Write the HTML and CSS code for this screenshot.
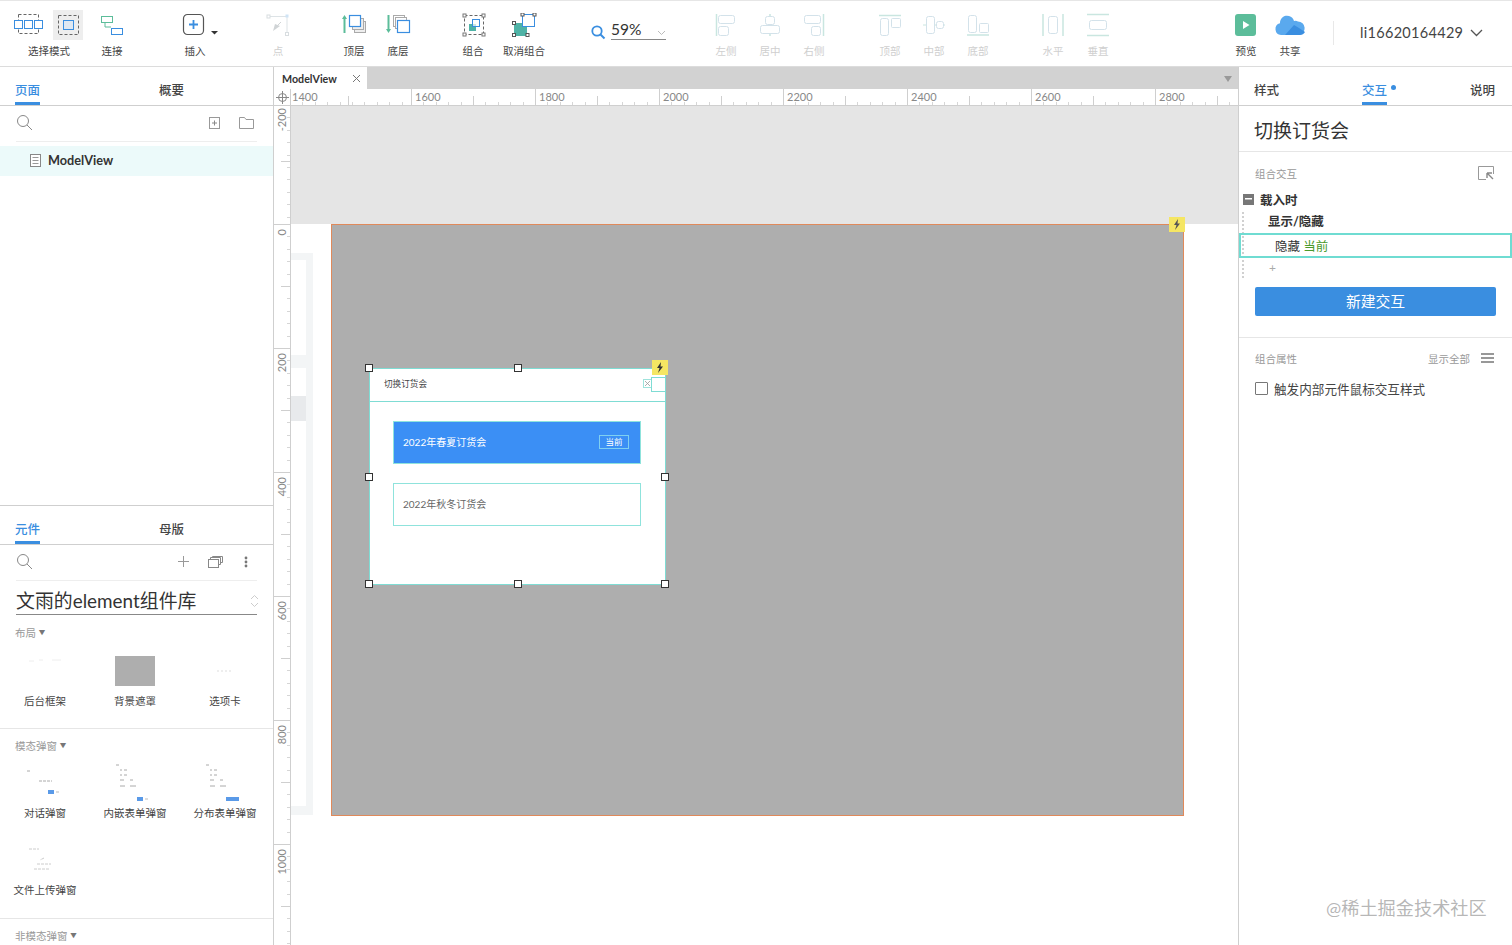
FILE: index.html
```html
<!DOCTYPE html>
<html lang="zh-CN">
<head>
    <meta charset="UTF-8">
    <title>ModelView</title>
    <link rel="stylesheet" href="styles.css">
</head>
<body>
<div class="app">
    <!-- Toolbar -->
    <header class="toolbar">
        <div class="tool tool-select">
            <div class="select-icons">
                <svg width="32" height="24" viewBox="0 0 32 24"><rect x="5.500" y="1.500" width="20" height="19" fill="none" stroke="#666" stroke-dasharray="3 2"/><g fill="#fff" stroke="#3a8ee0"><rect x="1.500" y="7.500" width="8" height="8"/><rect x="11.500" y="7.500" width="8" height="8"/><rect x="21.500" y="7.500" width="8" height="8"/></g></svg>
                <span class="select-active"><svg width="30" height="30" viewBox="0 0 30 30"><rect x="5.500" y="5.500" width="20" height="19" fill="none" stroke="#666" stroke-dasharray="3 2"/><rect x="10.500" y="10.500" width="10" height="9" fill="#dfe8f2" stroke="#3a8ee0"/></svg></span>
            </div>
            <span>选择模式</span>
        </div>
        <div class="tool">
            <svg width="24" height="24" viewBox="0 0 24 24"><rect x="1.500" y="3.500" width="11" height="6" fill="#fff" stroke="#5cbd9a"/><rect x="11.500" y="15.500" width="11" height="6" fill="#fff" stroke="#3a8ee0"/><path d="M5 10v4h6" fill="none" stroke="#5cbd9a"/></svg>
            <span>连接</span>
        </div>
        <div class="tool gap-insert">
            <svg class="insert-icon" width="40" height="24" viewBox="0 0 40 24"><rect x="1.500" y="1.500" width="20" height="20" rx="4" fill="none" stroke="#555" stroke-width="1.200"/><path d="M11.500 7v9M7 11.500h9" stroke="#3a8ee0" stroke-width="1.800"/><path d="M29 18h7l-3.500 3.500z" fill="#333"/></svg>
            <span>插入</span>
        </div>
        <div class="tool gap-insert off">
            <svg width="24" height="24" viewBox="0 0 24 24"><path d="M3 3.500h18v18" fill="none" stroke="#dde3e6"/><rect x="1" y="2" width="3" height="3" fill="#fff" stroke="#d8dde0"/><rect x="19.500" y="1.500" width="3" height="3" fill="#cfe4f5"/><rect x="19.500" y="19.500" width="3" height="3" fill="#fff" stroke="#d8dde0"/><path d="M7 18l2-7 5 2z" fill="#d0d4d6"/><path d="M11 13l4-4" stroke="#d0d4d6"/></svg>
            <span>点</span>
        </div>
        <div class="tool gap-order">
            <svg class="nudge" width="26" height="24" viewBox="0 0 26 24"><path d="M2.500 20V4" stroke="#5cbd9a" stroke-width="2"/><path d="M0 6l2.500-4L5 6z" fill="#5cbd9a"/><rect x="12.500" y="8.500" width="11" height="11" fill="#eee" stroke="#aaa"/><rect x="10.500" y="5.500" width="11" height="11" fill="#eee" stroke="#aaa"/><rect x="7.500" y="2.500" width="11" height="11" fill="#fff" stroke="#3a8ee0" stroke-width="1.200"/></svg>
            <span>顶层</span>
        </div>
        <div class="tool">
            <svg class="nudge" width="26" height="24" viewBox="0 0 26 24"><path d="M2.500 2v16" stroke="#5cbd9a" stroke-width="2"/><path d="M0 16l2.500 4L5 16z" fill="#5cbd9a"/><rect x="7.500" y="2.500" width="11" height="11" fill="#fff" stroke="#aaa"/><rect x="9.500" y="4.500" width="11" height="11" fill="#fff" stroke="#aaa"/><rect x="11.500" y="7.500" width="12" height="12" fill="#fff" stroke="#3a8ee0" stroke-width="1.200"/></svg>
            <span>底层</span>
        </div>
        <div class="tool gap-group">
            <svg class="nudge" width="24" height="24" viewBox="0 0 24 24"><rect x="2.500" y="2.500" width="19" height="19" fill="none" stroke="#666" stroke-dasharray="3 2"/><g fill="#fff" stroke="#777"><rect x="1" y="1" width="3" height="3"/><rect x="20" y="1" width="3" height="3"/><rect x="1" y="20" width="3" height="3"/><rect x="20" y="20" width="3" height="3"/></g><rect x="7" y="11" width="7" height="7" fill="#4fb3a6"/><rect x="10.500" y="6.500" width="7" height="7" fill="#fff" fill-opacity=".7" stroke="#3a8ee0"/></svg>
            <span>组合</span>
        </div>
        <div class="tool tool-wide">
            <svg class="nudge" width="26" height="24" viewBox="0 0 26 24"><rect x="2" y="10" width="13" height="13" fill="#4fb3a6"/><rect x="10.500" y="1.500" width="12" height="12" fill="#fff" stroke="#3a8ee0"/><g fill="#fff" stroke="#555"><rect x="9" y="0" width="3" height="3"/><rect x="21" y="0" width="3" height="3"/><rect x="0.500" y="8.500" width="3" height="3"/><rect x="0.500" y="20.500" width="3" height="3"/><rect x="14" y="20.500" width="3" height="3"/></g></svg>
            <span>取消组合</span>
        </div>
        <div class="zoom-box">
            <svg width="15" height="15" viewBox="0 0 15 15"><circle cx="6" cy="6" r="4.700" fill="none" stroke="#3a8ee0" stroke-width="1.800"/><path d="M9.500 9.500l4 4" stroke="#3a8ee0" stroke-width="2"/></svg>
            <div class="zoom-value">59%<svg class="zoom-arrow" width="9" height="6" viewBox="0 0 9 6"><path d="M1 1l3.500 3.500L8 1" fill="none" stroke="#bbb"/></svg></div>
        </div>
        <div class="tool off gap-align">
            <svg width="24" height="24" viewBox="0 0 24 24"><path d="M2.500 1v22" stroke="#c9e6e0" stroke-width="1.500"/><rect x="4.500" y="2.500" width="16" height="8" rx="2" class="pale"/><rect x="4.500" y="13.500" width="10" height="9" rx="2" class="pale"/></svg>
            <span>左侧</span>
        </div>
        <div class="tool off">
            <svg width="24" height="24" viewBox="0 0 24 24"><path d="M12 1v22" stroke="#c9e6e0" stroke-width="1.500"/><rect x="7.500" y="3.500" width="9" height="8" rx="2" class="pale"/><rect x="2.500" y="12.500" width="19" height="8" rx="2" class="pale"/></svg>
            <span>居中</span>
        </div>
        <div class="tool off">
            <svg width="24" height="24" viewBox="0 0 24 24"><path d="M21.500 1v22" stroke="#c9e6e0" stroke-width="1.500"/><rect x="2.500" y="2.500" width="16" height="8" rx="2" class="pale"/><rect x="9.500" y="13.500" width="9" height="9" rx="2" class="pale"/></svg>
            <span>右侧</span>
        </div>
        <div class="tool off gap-order">
            <svg width="24" height="24" viewBox="0 0 24 24"><path d="M1 2.500h22" stroke="#c9e6e0" stroke-width="1.500"/><rect x="2.500" y="5.500" width="8" height="17" rx="2" class="pale"/><rect x="13.500" y="5.500" width="9" height="9" rx="1" class="pale"/></svg>
            <span>顶部</span>
        </div>
        <div class="tool off">
            <svg width="24" height="24" viewBox="0 0 24 24"><path d="M1 12h22" stroke="#c9e6e0"/><rect x="4.500" y="3.500" width="8" height="17" rx="2" class="pale"/><rect x="14.500" y="8.500" width="7" height="7" rx="2" class="pale"/></svg>
            <span>中部</span>
        </div>
        <div class="tool off">
            <svg width="24" height="24" viewBox="0 0 24 24"><path d="M1 22h22" stroke="#c9e6e0" stroke-width="1.500"/><rect x="2.500" y="2.500" width="8" height="17" rx="2" class="pale"/><rect x="13.500" y="10.500" width="9" height="9" rx="1" class="pale"/></svg>
            <span>底部</span>
        </div>
        <div class="tool off gap-group">
            <svg width="24" height="24" viewBox="0 0 24 24"><path d="M2 1v22M22 1v22" stroke="#c9e6e0" stroke-width="1.500"/><rect x="7.500" y="3.500" width="9" height="17" rx="2" class="pale"/></svg>
            <span>水平</span>
        </div>
        <div class="tool off gap-thin">
            <svg width="24" height="24" viewBox="0 0 24 24"><path d="M1 1.500h22M1 22.500h22" stroke="#c9e6e0" stroke-width="1.500"/><rect x="3.500" y="7.500" width="17" height="9" rx="2" class="pale"/></svg>
            <span>垂直</span>
        </div>
        <div class="tool gap-run">
            <svg width="24" height="24" viewBox="0 0 24 24"><rect x="1" y="1" width="21" height="22" rx="3" fill="#5cbd9a"/><path d="M9 8l6.500 4L9 16z" fill="#fff"/></svg>
            <span>预览</span>
        </div>
        <div class="tool">
            <svg width="32" height="24" viewBox="0 0 32 24"><path d="M7 22a6 6 0 0 1-1-11.800A7 7 0 0 1 15 3a7 7 0 0 1 5 5a5 5 0 0 1 4 .500a6.800 6.800 0 0 1 1 13.500z" fill="#5aa9ee"/><path d="M11 22l9-10 5 3 6 4a6 6 0 0 1-6 3z" fill="#3a8ee0"/></svg>
            <span>共享</span>
        </div>
        <div class="user-split"></div>
        <div class="user-name">li16620164429<svg width="13" height="8" viewBox="0 0 13 8"><path d="M1 1l5.500 5.500L12 1" fill="none" stroke="#555" stroke-width="1.300"/></svg></div>
    </header>

    <div class="main">
        <!-- Left side: pages and widgets -->
        <aside class="left-panel">
            <section class="pages">
                <div class="tabs tabs-left">
                    <span class="tab active">页面</span>
                    <span class="tab tab-second">概要</span>
                </div>
                <div class="search-row">
                    <svg width="17" height="17" viewBox="0 0 17 17"><circle cx="7" cy="7" r="5.500" fill="none" stroke="#888"/><path d="M11 11l5 5" stroke="#888"/></svg>
                    <svg class="push" width="11" height="12" viewBox="0 0 11 12"><rect x=".5" y=".5" width="10" height="11" fill="none" stroke="#999"/><path d="M5.500 3.500v5M3 6h5" stroke="#888"/></svg>
                    <svg width="15" height="12" viewBox="0 0 15 12"><path d="M.5 11.500V.5h5l1.500 2h7.500v9z" fill="none" stroke="#999"/></svg>
                </div>
                <div class="page-row">
                    <svg width="11" height="13" viewBox="0 0 11 13"><rect x=".5" y=".5" width="10" height="12" fill="#fff" stroke="#888"/><path d="M2.500 3.500h6M2.500 6.500h6M2.500 9.500h6" stroke="#999"/></svg>
                    ModelView
                </div>
            </section>
            <section class="widgets">
                <div class="tabs tabs-left">
                    <span class="tab active">元件</span>
                    <span class="tab tab-second">母版</span>
                </div>
                <div class="search-row">
                    <svg width="17" height="17" viewBox="0 0 17 17"><circle cx="7" cy="7" r="5.500" fill="none" stroke="#888"/><path d="M11 11l5 5" stroke="#888"/></svg>
                    <svg class="push" width="11" height="11" viewBox="0 0 11 11"><path d="M5.500 0v11M0 5.500h11" stroke="#999"/></svg>
                    <svg class="lib-copy" width="15" height="12" viewBox="0 0 15 12"><rect x=".5" y="3.500" width="10" height="8" fill="#fff" stroke="#888"/><path d="M2.500 3.500v-2h10v7h-2M4.500 1.500v-1h10v6h-2" fill="none" stroke="#888"/></svg>
                    <svg width="4" height="12" viewBox="0 0 4 12"><circle cx="2" cy="2" r="1.400" fill="#777"/><circle cx="2" cy="6" r="1.400" fill="#777"/><circle cx="2" cy="10" r="1.400" fill="#777"/></svg>
                </div>
                <div class="lib-select">文雨的element组件库
                    <svg width="9" height="14" viewBox="0 0 9 14"><path d="M1 5l3.500-3.500L8 5M1 9l3.500 3.500L8 9" fill="none" stroke="#ccc"/></svg>
                </div>
                <div class="group first">
                    <div class="group-title">布局 <i>▼</i></div>
                    <div class="cards">
                        <div class="card">
                            <svg width="40" height="30" viewBox="0 0 40 30"><path d="M4 5h5M14 4h4M27 4h9" stroke="#eee"/></svg>
                            <span>后台框架</span>
                        </div>
                        <div class="card">
                            <div class="thumb-mask"></div>
                            <span>背景遮罩</span>
                        </div>
                        <div class="card">
                            <svg width="40" height="30" viewBox="0 0 40 30"><path d="M12 15h16" stroke="#ddd" stroke-dasharray="2 2"/></svg>
                            <span>选项卡</span>
                        </div>
                    </div>
                </div>
                <div class="group modal">
                    <div class="group-title">模态弹窗 <i>▼</i></div>
                    <div class="cards">
                        <div class="card card-tall">
                            <svg width="42" height="38" viewBox="0 0 42 38"><path d="M3 7h3M15 17h13" stroke="#aaa" stroke-dasharray="3 1"/><rect x="24" y="26" width="6" height="4" fill="#5a9ae8"/><path d="M32 28h3" stroke="#bbb"/></svg>
                            <span>对话弹窗</span>
                        </div>
                        <div class="card card-tall">
                            <svg width="42" height="38" viewBox="0 0 42 38"><path d="M2 1h3M6 6h2M10 6h3M6 11h2M10 11h3M6 16h4M16 16h3M6 22h5M16 22h6" stroke="#aaa"/><rect x="23" y="33" width="6" height="4" fill="#5a9ae8"/><path d="M31 35h3" stroke="#bbb"/></svg>
                            <span>内嵌表单弹窗</span>
                        </div>
                        <div class="card card-tall">
                            <svg width="42" height="38" viewBox="0 0 42 38"><path d="M2 1h3M6 6h2M10 6h3M6 11h2M10 11h3M6 16h4M16 16h3M6 22h5M16 22h6" stroke="#aaa"/><rect x="22" y="33" width="13" height="4" fill="#5a9ae8"/></svg>
                            <span>分布表单弹窗</span>
                        </div>
                        <div class="card card-tall card-upload">
                            <svg width="42" height="30" viewBox="0 0 42 30"><path d="M5 5h10M20 14l-4 2M13 20h14M10 25h16" stroke="#ccc" stroke-dasharray="3 1"/></svg>
                            <span>文件上传弹窗</span>
                        </div>
                    </div>
                </div>
                <div class="group">
                    <div class="group-title">非模态弹窗 <i>▼</i></div>
                </div>
            </section>
        </aside>

        <!-- Center: canvas -->
        <main class="center">
            <div class="doc-tabs">
                <div class="doc-tab">ModelView
                    <svg width="9" height="9" viewBox="0 0 9 9"><path d="M1 1l7 7M8 1l-7 7" stroke="#777"/></svg>
                </div>
                <span class="doc-arrow"></span>
            </div>
            <div class="ruler-h">
                <div class="ruler-corner">
                    <svg width="13" height="13" viewBox="0 0 13 13"><circle cx="6.500" cy="6.500" r="4" fill="none" stroke="#888"/><path d="M6.500 0v13M0 6.500h13" stroke="#888"/></svg>
                </div>
                <div class="h-seg h-first">1400</div>
                <div class="h-seg">1600</div>
                <div class="h-seg">1800</div>
                <div class="h-seg">2000</div>
                <div class="h-seg">2200</div>
                <div class="h-seg">2400</div>
                <div class="h-seg">2600</div>
                <div class="h-seg h-last">2800</div>
            </div>
            <div class="workspace">
                <div class="ruler-v">
                    <div class="v-seg v-first"><span>-200</span></div>
                    <div class="v-seg"><span>0</span></div>
                    <div class="v-seg"><span>200</span></div>
                    <div class="v-seg"><span>400</span></div>
                    <div class="v-seg"><span>600</span></div>
                    <div class="v-seg"><span>800</span></div>
                    <div class="v-seg"><span>1000</span></div>
                </div>
                <div class="canvas">
                    <div class="canvas-top"></div>
                    <div class="ghost">
                        <div class="ghost-inner"></div>
                        <div class="ghost-row"></div>
                    </div>
                    <div class="mask-page">
                        <span class="bolt bolt-page">
                            <svg width="8" height="11" viewBox="0 0 8 11"><path d="M5 0L1 6h2.500L2 11l5-6.500H4.500z" fill="#555"/></svg>
                        </span>
                        <div class="dialog">
                            <div class="dialog-head">切换订货会
                                <span class="close-x">
                                    <svg width="9" height="9" viewBox="0 0 9 9"><rect x=".5" y=".5" width="8" height="8" fill="#fff" stroke="#9fe3dc"/><path d="M2 2l5 5M7 2L2 7" stroke="#999" stroke-width=".8"/></svg>
                                </span>
                                <span class="close-box"></span>
                            </div>
                            <div class="dialog-body">
                                <div class="season season-on">2022年春夏订货会<span class="season-tag">当前</span></div>
                                <div class="season">2022年秋冬订货会</div>
                            </div>
                            <span class="bolt bolt-dialog">
                                <svg width="8" height="11" viewBox="0 0 8 11"><path d="M5 0L1 6h2.500L2 11l5-6.500H4.500z" fill="#333"/></svg>
                            </span>
                            <i class="handle h-tl"></i><i class="handle h-tc"></i>
                            <i class="handle h-ml"></i><i class="handle h-mr"></i>
                            <i class="handle h-bl"></i><i class="handle h-bc"></i><i class="handle h-br"></i>
                        </div>
                    </div>
                </div>
            </div>
        </main>

        <!-- Right side: interactions -->
        <aside class="right-panel">
            <div class="tabs tabs-right">
                <span class="tab">样式</span>
                <span class="tab active tab-dot">交互</span>
                <span class="tab">说明</span>
            </div>
            <div class="widget-name">切换订货会</div>
            <div class="inter-section">
                <div class="section-head">
                    <span>组合交互</span>
                    <svg width="16" height="14" viewBox="0 0 16 14"><path d="M8 13.500H.5V.5h15V8" fill="none" stroke="#999"/><path d="M9 7h5M9 7v5M9 7l6 6" fill="none" stroke="#888" stroke-width="1.400"/></svg>
                </div>
                <div class="inter-tree">
                    <div class="tree-event"><span class="minus"></span>载入时</div>
                    <div class="tree-action">显示/隐藏</div>
                    <div class="tree-target">隐藏 <em>当前</em></div>
                    <div class="tree-add">+</div>
                </div>
                <div class="new-btn">新建交互</div>
            </div>
            <div class="props">
                <div class="section-head">
                    <span>组合属性</span>
                    <span class="show-all">显示全部</span>
                    <svg width="13" height="10" viewBox="0 0 13 10"><path d="M0 1h13M0 5h13M0 9h13" stroke="#777" stroke-width="1.500"/></svg>
                </div>
                <label class="check-row"><span class="checkbox"></span>触发内部元件鼠标交互样式</label>
            </div>
            <div class="watermark">@稀土掘金技术社区</div>
        </aside>
    </div>
</div>
</body>
</html>
```

FILE: styles.css
```css
* {
    box-sizing: border-box;
}

body {
    margin: 0;
    font-family: "Lato", "Noto Sans CJK SC", sans-serif;
    color: #333;
    background: #fff;
}

.app {
    width: 1512px;
    height: 945px;
    display: flex;
    flex-direction: column;
    overflow: hidden;
}

/* Toolbar */
.toolbar {
    height: 67px;
    flex: none;
    display: flex;
    align-items: flex-start;
    padding-left: 8px;
    border-top: 1px solid #e6e6e6;
    border-bottom: 1px solid #dcdcdc;
}

.tool {
    width: 44px;
    height: 65px;
    flex: none;
    display: flex;
    flex-direction: column;
    align-items: center;
    padding-top: 12px;
    font-size: 10.5px;
    color: #444;
}

.tool svg {
    height: 24px;
    flex: none;
}

.tool > span {
    position: relative;
    top: 6px;
    line-height: 16px;
    white-space: nowrap;
}

.tool-select {
    width: 82px;
    padding-top: 9px;
}

.select-icons {
    display: flex;
    align-items: center;
    gap: 8px;
    height: 30px;
    margin-left: -3px;
}

.tool-select > span {
    top: 3px;
}

.select-active {
    display: block;
    width: 30px;
    height: 30px;
    background: #eeeeee;
}

.select-active svg {
    height: 30px;
}

.tool-wide {
    width: 58px;
}

.insert-icon {
    margin-left: 14px;
}

.nudge {
    margin-left: 2px;
}

.gap-insert {
    margin-left: 39px;
}

.gap-order {
    margin-left: 32px;
}

.gap-group {
    margin-left: 31px;
}

.gap-align {
    margin-left: 37px;
}

.gap-thin {
    margin-left: 1px;
}

.gap-run {
    margin-left: 104px;
}

.off {
    color: #cfcfcf;
}

.pale {
    fill: #fff;
    stroke: #d3e2ea;
}

.zoom-box {
    width: 76px;
    margin-left: 38px;
    padding-top: 23px;
    display: flex;
    align-items: flex-start;
    gap: 5px;
    flex: none;
}

.zoom-box > svg {
    margin-top: 1px;
}

.zoom-value {
    width: 55px;
    height: 19px;
    margin-top: -3px;
    padding-top: 1px;
    border-bottom: 1px solid #888;
    font-size: 15.5px;
    line-height: 15px;
    position: relative;
}

.zoom-arrow {
    position: absolute;
    right: 0;
    top: 9px;
}

.user-split {
    width: 1px;
    height: 24px;
    margin: 20px 0 0 21px;
    background: #e8e8e8;
    flex: none;
}

.user-name {
    margin: 23px 0 0 26px;
    font-size: 14.5px;
    line-height: 18px;
    display: flex;
    align-items: center;
    gap: 7px;
    letter-spacing: .3px;
    color: #444;
}

.main {
    flex: 1;
    display: flex;
    min-height: 0;
}

/* Tabs shared by the side panels */
.tabs {
    height: 39px;
    display: flex;
    border-bottom: 1px solid #cfcfcf;
    padding-top: 12px;
    font-size: 12.5px;
    font-weight: 500;
}

.tab {
    height: 26px;
    line-height: 24px;
    color: #444;
}

.tab.active {
    color: #3a8ee0;
    border-bottom: 3px solid #3a8ee0;
}

.tabs-left {
    padding-left: 15px;
}

.tab-second {
    margin-left: 119px;
}

/* Left panel */
.left-panel {
    width: 274px;
    flex: none;
    border-right: 1px solid #cfcfcf;
    display: flex;
    flex-direction: column;
}

.pages {
    height: 439px;
    flex: none;
    border-bottom: 1px solid #cfcfcf;
}

.search-row {
    height: 36px;
    margin: 0 16px;
    padding-bottom: 2px;
    display: flex;
    align-items: center;
    border-bottom: 1px solid #eeeeee;
}

.push {
    margin-left: auto;
}

.pages .search-row {
    padding-right: 3px;
    gap: 19px;
}

.widgets .search-row {
    padding-right: 9px;
    gap: 19px;
}

.lib-copy {
    margin-right: 2px;
}

.page-row {
    height: 30px;
    margin-top: 4px;
    padding-left: 30px;
    padding-bottom: 2px;
    display: flex;
    align-items: center;
    gap: 7px;
    background: #ecfafa;
    font-size: 12.7px;
    font-weight: 700;
}

.widgets {
    flex: 1;
    min-height: 0;
}

.lib-select {
    height: 26px;
    margin: 8px 16px 0;
    padding-bottom: 2px;
    border-bottom: 1px solid #888;
    display: flex;
    align-items: center;
    justify-content: space-between;
    font-size: 18.9px;
    line-height: 24px;
    color: #333;
}

.lib-select svg {
    margin-right: -2px;
}

.group {
    border-bottom: 1px solid #e6e6e6;
    padding-top: 10px;
}

.group.first {
    height: 114px;
    padding-top: 11px;
}

.group.modal {
    height: 190px;
}

.group:last-child {
    border-bottom: 0;
}

.group-title {
    padding-left: 15px;
    height: 14px;
    font-size: 10.5px;
    line-height: 14px;
    color: #999;
}

.group-title i {
    font-style: normal;
    font-size: 6.5px;
    vertical-align: 2px;
    color: #777;
}

.cards {
    display: grid;
    grid-template-columns: repeat(3, 90px);
}

.card {
    height: 60px;
    margin-top: 16px;
    display: flex;
    flex-direction: column;
    align-items: center;
    font-size: 10.5px;
    color: #444;
}

.card svg {
    flex: none;
}

.card span {
    margin-top: 7px;
    line-height: 16px;
    white-space: nowrap;
}

.card-tall {
    height: 67px;
    margin-top: 11px;
}

.card-tall span {
    margin-top: 3px;
}

.card-upload {
    margin-top: 13px;
}

.card-upload span {
    margin-top: 8px;
}

.thumb-mask {
    width: 40px;
    height: 30px;
    background: #aeaeae;
}

/* Center */
.center {
    width: 964px;
    flex: none;
    display: flex;
    flex-direction: column;
    min-height: 0;
}

.doc-tabs {
    height: 22px;
    flex: none;
    display: flex;
    justify-content: space-between;
    align-items: center;
    background: #d2d2d2;
}

.doc-tab {
    width: 93px;
    height: 22px;
    background: #fff;
    display: flex;
    align-items: center;
    justify-content: space-between;
    padding: 0 6px 0 8px;
    font-size: 10.7px;
    font-weight: 700;
}

.doc-arrow {
    width: 0;
    height: 0;
    margin: 2px 6px 0 0;
    border-style: solid;
    border-width: 6px 4.500px 0;
    border-color: #999 transparent transparent;
}

.ruler-h {
    height: 17px;
    flex: none;
    display: flex;
    border-bottom: 1px solid #cfcfcf;
    background-color: #fff;
    overflow: hidden;
}

.ruler-corner {
    width: 17px;
    flex: none;
    display: flex;
    align-items: center;
    justify-content: center;
    border-right: 1px solid #cfcfcf;
}

.h-seg {
    width: 124px;
    flex: none;
    border-left: 1px solid #cfcfcf;
    padding-left: 3px;
    font-size: 11px;
    line-height: 15px;
    color: #888;
    background-image:
        linear-gradient(#cfcfcf, #cfcfcf),
        repeating-linear-gradient(90deg, transparent 0 11.400px, #d6d6d6 11.400px 12.400px);
    background-size: 1px 9px, 100% 3px;
    background-position: 61px 100%, 0 100%;
    background-repeat: no-repeat;
}

.h-first {
    width: 120px;
    border-left: 0;
    background-position: 57px 100%, 0 100%;
    padding-left: 1px;
}

.h-last {
    width: 84px;
}

.workspace {
    flex: 1;
    display: flex;
    min-height: 0;
}

.ruler-v {
    width: 17px;
    flex: none;
    border-right: 1px solid #cfcfcf;
    background: #fff;
}

.v-seg {
    height: 124px;
    border-top: 1px solid #cfcfcf;
    padding-top: 4px;
    font-size: 11px;
    color: #888;
    background-image:
        linear-gradient(#cfcfcf, #cfcfcf),
        repeating-linear-gradient(180deg, transparent 0 11.400px, #d6d6d6 11.400px 12.400px);
    background-size: 9px 1px, 3px 100%;
    background-position: 100% 61px, 100% 0;
    background-repeat: no-repeat;
}

.v-seg span {
    display: block;
    width: 12px;
    writing-mode: vertical-rl;
    transform: rotate(180deg);
    line-height: 12px;
    margin-left: 2px;
}

.v-first {
    height: 118px;
    border-top: 0;
    padding-top: 2px;
    background-position: 100% 55px, 100% 0;
}

.canvas {
    flex: 1;
    position: relative;
    background: #fff;
    min-width: 0;
}

.canvas-top {
    height: 118px;
    background: #e5e5e5;
}

.ghost {
    position: absolute;
    left: 0;
    top: 147px;
    width: 22px;
    height: 562px;
    background: #f3f5f6;
}

.ghost-inner {
    position: absolute;
    left: 0;
    top: 7px;
    width: 15px;
    height: 95px;
    background: #fff;
}

.ghost-row {
    position: absolute;
    left: 0;
    top: 115px;
    width: 15px;
    height: 438px;
    background: linear-gradient(#fff 0 28px, #e8eaec 28px 53px, #fff 53px);
}

.mask-page {
    position: absolute;
    left: 40px;
    top: 118px;
    width: 853px;
    height: 592px;
    background: #aeaeae;
    border: 1px solid #e0895a;
}

.bolt {
    position: absolute;
    display: flex;
    align-items: center;
    justify-content: center;
    background: #f5e663;
    width: 16px;
    height: 15px;
    z-index: 2;
}

.bolt-page {
    right: -2px;
    top: -8px;
}

.dialog {
    position: absolute;
    left: 37px;
    top: 143px;
    width: 297px;
    height: 217px;
    background: #fff;
    border: 1px solid #7fdcd4;
}

.dialog-head {
    height: 33px;
    padding-left: 14px;
    border-bottom: 1px solid #7fdcd4;
    font-size: 8.6px;
    line-height: 30px;
    color: #444;
    position: relative;
}

.close-x {
    position: absolute;
    right: 13px;
    top: 10px;
    line-height: 0;
}

.close-box {
    position: absolute;
    right: -1px;
    top: 8px;
    width: 15px;
    height: 15px;
    border: 1px solid #7fdcd4;
    background: #fff;
}

.dialog-body {
    padding: 19px 24px 0 23px;
    display: flex;
    flex-direction: column;
    gap: 19px;
}

.season {
    height: 43px;
    padding: 0 11px 2px 9px;
    display: flex;
    align-items: center;
    justify-content: space-between;
    border: 1px solid #8fe3dc;
    font-size: 10px;
    color: #666;
}

.season-on {
    background: #3b8ff5;
    color: #fff;
}

.season-tag {
    width: 30px;
    height: 14px;
    border: 1px solid #7fd0f0;
    font-size: 8.5px;
    line-height: 12px;
    text-align: center;
}

.bolt-dialog {
    right: -3px;
    top: -9px;
}

.handle {
    position: absolute;
    width: 8px;
    height: 8px;
    background: #fff;
    border: 1.500px solid #333;
    z-index: 1;
}

.h-tl { left: -5px; top: -5px; }
.h-tc { left: 144px; top: -5px; }
.h-ml { left: -5px; top: 104px; }
.h-mr { right: -4px; top: 104px; }
.h-bl { left: -5px; bottom: -4px; }
.h-bc { left: 144px; bottom: -4px; }
.h-br { right: -4px; bottom: -4px; }

/* Right panel */
.right-panel {
    width: 274px;
    flex: none;
    border-left: 1px solid #cfcfcf;
    position: relative;
}

.tabs-right {
    padding: 12px 17px 0 15px;
    justify-content: space-between;
}

.tab-dot {
    position: relative;
}

.tab-dot::after {
    content: "";
    position: absolute;
    left: 29px;
    top: 6px;
    width: 5px;
    height: 5px;
    border-radius: 50%;
    background: #3a8ee0;
}

.widget-name {
    height: 46px;
    padding-left: 15px;
    border-bottom: 1px solid #e6e6e6;
    font-size: 19px;
    line-height: 50px;
    color: #333;
}

.inter-section {
    height: 186px;
    padding-top: 13px;
    border-bottom: 1px solid #e6e6e6;
}

.section-head {
    display: flex;
    align-items: center;
    height: 16px;
    margin: 0 18px 0 16px;
    font-size: 10.5px;
    color: #999;
}

.inter-section .section-head {
    justify-content: space-between;
}

.inter-tree {
    margin-top: 8px;
    font-size: 12.5px;
    color: #333;
    background-image: radial-gradient(#999 .6px, transparent .8px);
    background-size: 4px 4px;
    background-position: 2px 18px;
    background-repeat: repeat-y;
}

.tree-event {
    height: 21px;
    display: flex;
    align-items: center;
    gap: 6px;
    padding-left: 4px;
    padding-bottom: 1px;
    font-weight: 700;
    background: #fff;
}

.minus {
    width: 11px;
    height: 11px;
    background: #777 linear-gradient(#fff, #fff) center / 7px 1.500px no-repeat;
}

.tree-action {
    height: 22px;
    line-height: 24px;
    padding-left: 29px;
    font-weight: 700;
}

.tree-target {
    height: 25px;
    margin-top: 1px;
    border: 2px solid #6fdcd2;
    padding-left: 34px;
    line-height: 23px;
}

.tree-target em {
    font-style: normal;
    color: #4a9a2a;
}

.tree-add {
    height: 20px;
    padding-left: 30px;
    font-size: 12px;
    line-height: 20px;
    color: #aaa;
}

.new-btn {
    width: 241px;
    height: 29px;
    margin: 9px 0 0 16px;
    background: #3a8ee0;
    border-radius: 2px;
    color: #fff;
    font-size: 14.8px;
    line-height: 28px;
    text-align: center;
}

.props {
    padding-top: 12px;
}

.show-all {
    margin-left: auto;
    margin-right: 11px;
}

.check-row {
    display: flex;
    align-items: center;
    gap: 6px;
    margin: 13px 0 0 16px;
    font-size: 12.6px;
    color: #444;
}

.checkbox {
    width: 13px;
    height: 13px;
    border: 1px solid #777;
    border-radius: 1px;
}

.watermark {
    position: absolute;
    left: 87px;
    top: 829px;
    font-size: 18.2px;
    line-height: 24px;
    color: rgba(120, 120, 120, .55);
    white-space: nowrap;
}
```
